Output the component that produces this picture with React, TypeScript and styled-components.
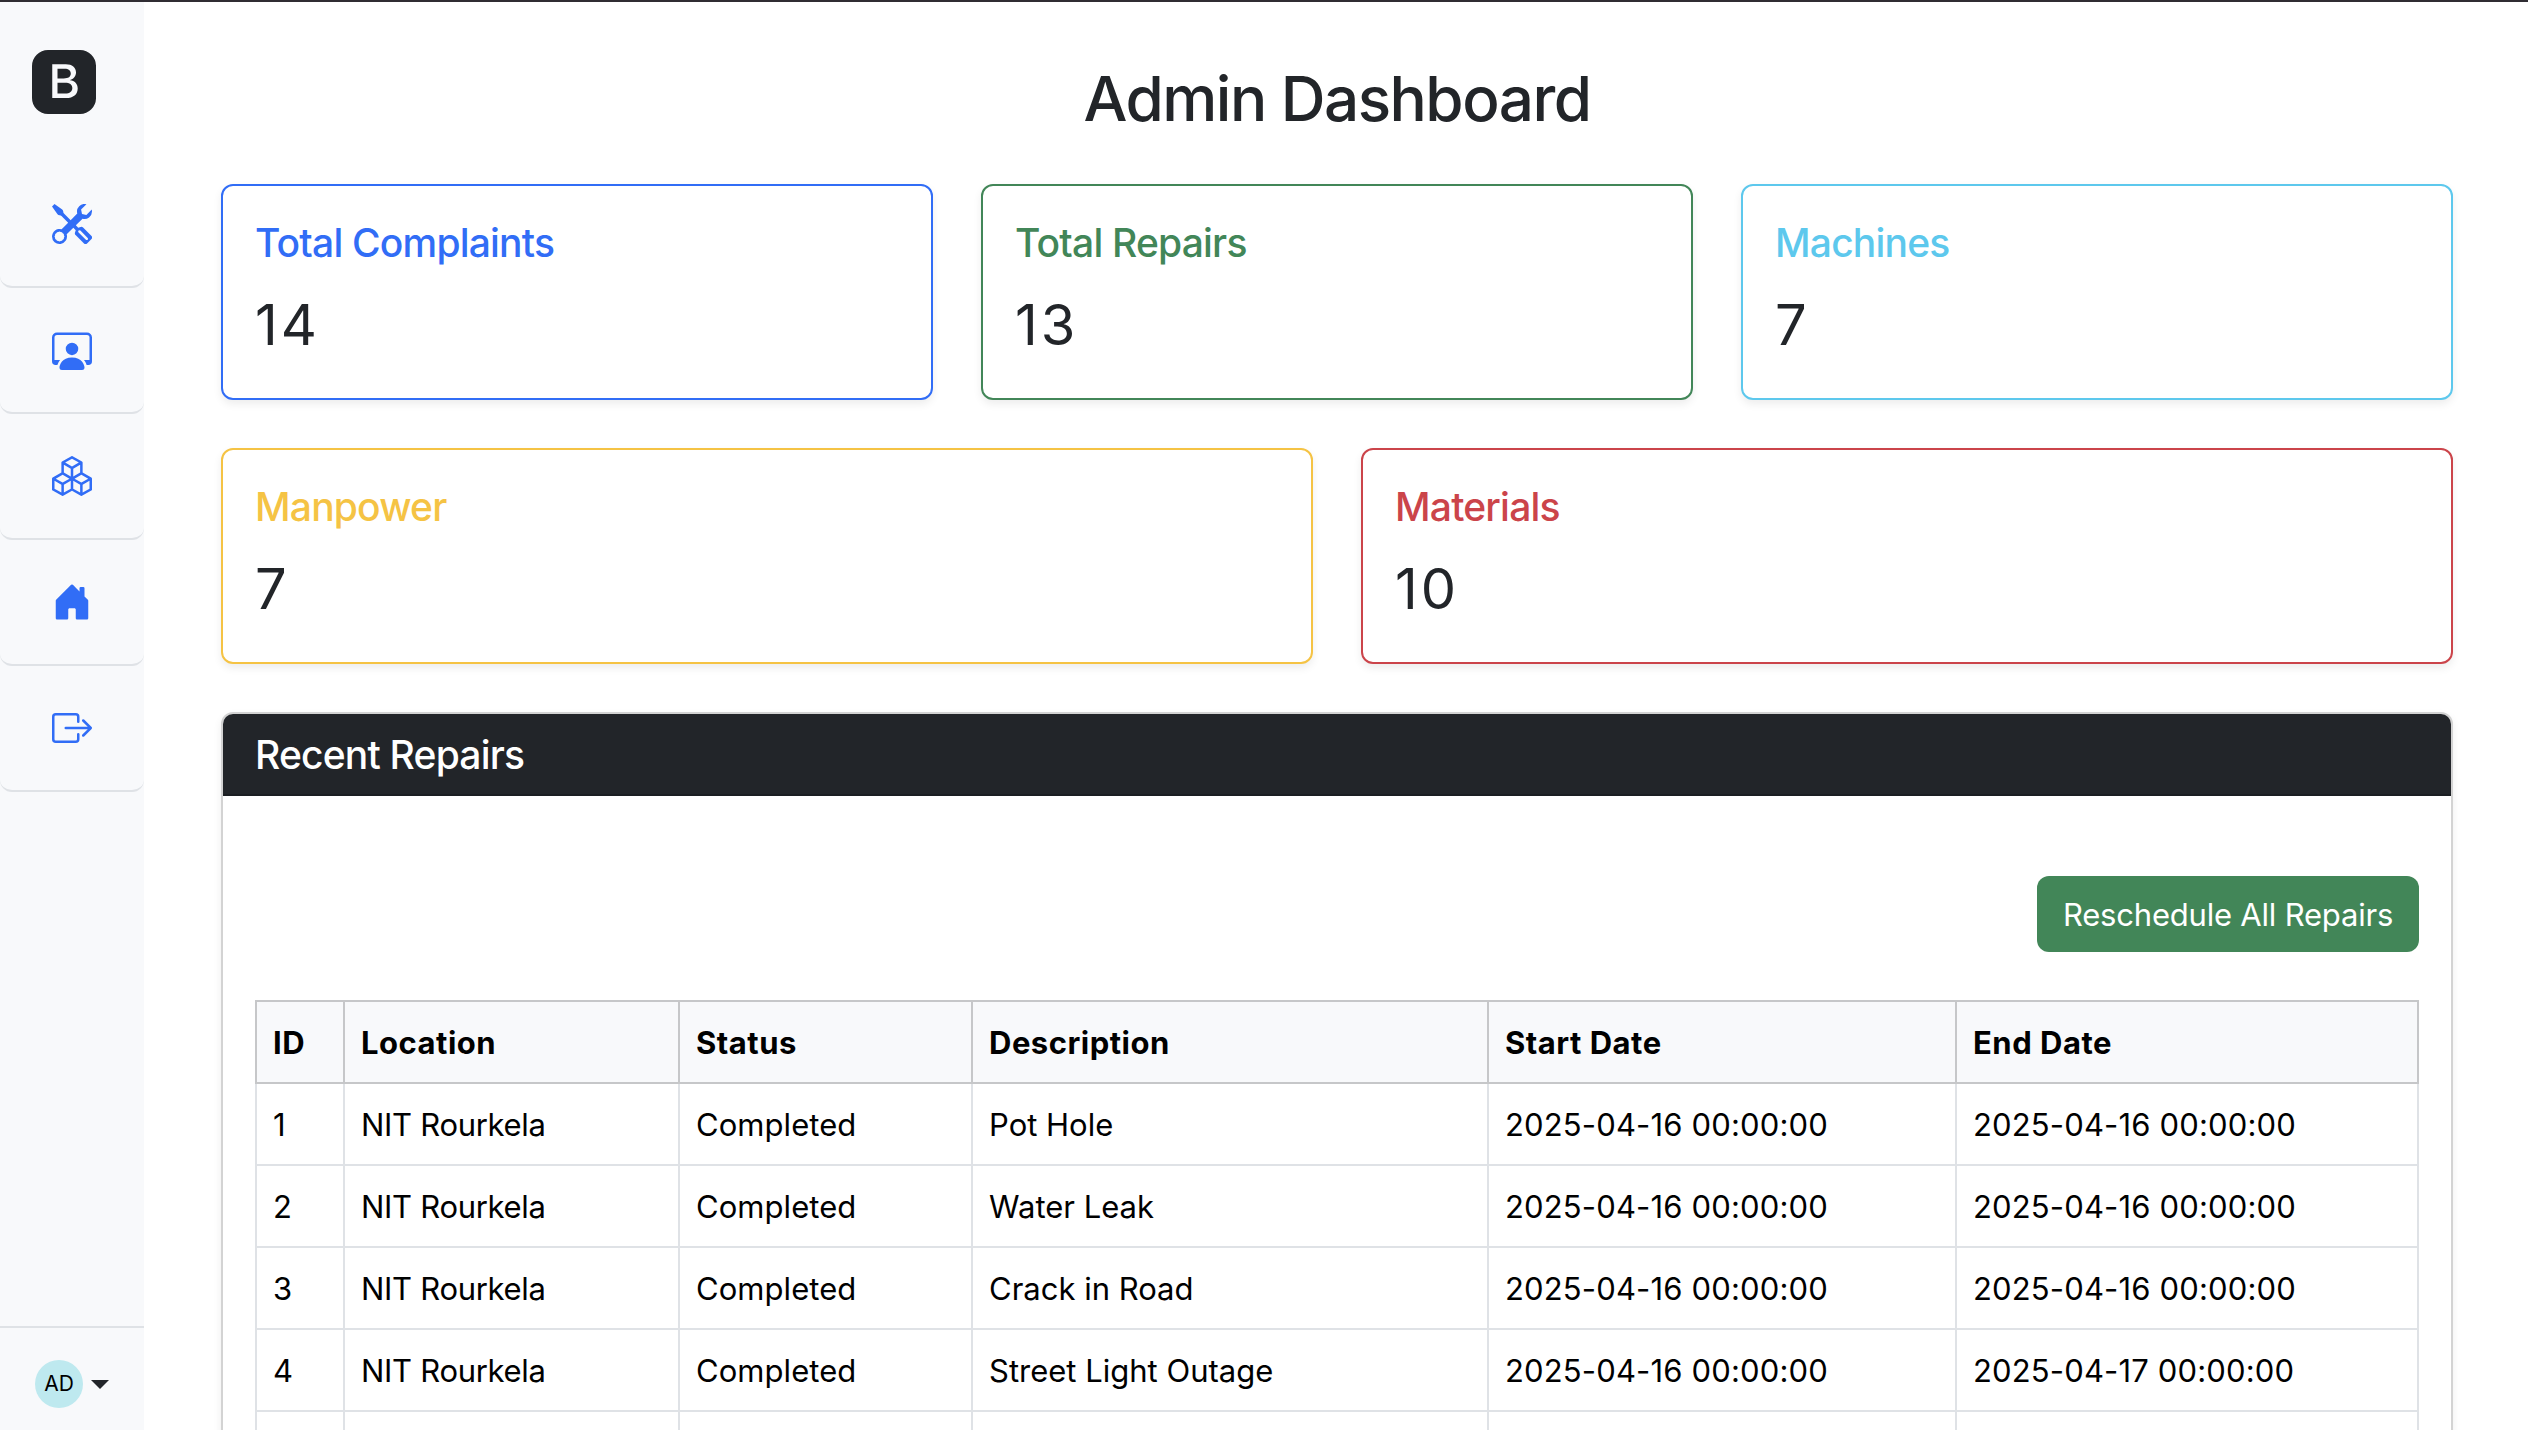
import React from 'react';
import styled, { createGlobalStyle, css } from 'styled-components';
import {
  BsBootstrapFill,
  BsBoxArrowRight,
  BsBoxes,
  BsHouseDoorFill,
  BsPersonWorkspace,
  BsTools,
} from 'react-icons/bs';

const GlobalStyle = createGlobalStyle`
  *, *::before, *::after { box-sizing: border-box; }
  body {
    margin: 0;
    overflow: hidden;
    background: #fff;
    color: #222529;
    font-family: Inter, "Liberation Sans", sans-serif;
    font-size: 31px;
    line-height: 48px;
  }
`;

const Page = styled.div`
  display: flex;
  height: 1430px;
  border-top: 2px solid #302d33;
  overflow: hidden;
`;

const Sidebar = styled.aside`
  display: flex;
  flex-direction: column;
  flex: 0 0 144px;
  background: #f8f9fb;
`;

const Brand = styled.a`
  display: flex;
  padding: 48px 32px;
  color: #222529;
`;

const Nav = styled.nav`
  display: flex;
  flex-direction: column;
  flex: 1;
`;

const NavLink = styled.a`
  display: flex;
  align-items: center;
  justify-content: center;
  height: 126px;
  border-bottom: 2px solid #dfe2e6;
  border-radius: 12px;
  color: #316df6;
`;

const Account = styled.div`
  display: flex;
  align-items: flex-start;
  gap: 8px;
  height: 104px;
  padding: 32px 0 0 35px;
  border-top: 2px solid #dfe2e6;
`;

const Avatar = styled.span`
  display: flex;
  align-items: center;
  justify-content: center;
  width: 48px;
  height: 48px;
  border-radius: 50%;
  background: #bee9ef;
  color: #000;
  font-size: 21px;
  line-height: 48px;
`;

const Caret = styled.span`
  margin-top: 20px;
  border-top: 9px solid #222529;
  border-left: 9px solid transparent;
  border-right: 9px solid transparent;
`;

const Main = styled.main`
  flex: 1;
  min-width: 0;
  padding: 59px 75px 0 77px;
`;

const PageTitle = styled.h2`
  margin: 0 0 47px;
  font-size: 62px;
  font-weight: 500;
  line-height: 76px;
  letter-spacing: -1.5px;
  text-align: center;
`;

const StatRow = styled.section`
  display: flex;
  gap: 48px;
  margin-bottom: 48px;
`;

const cardBox = css`
  border: 2px solid #d3d3d3;
  border-radius: 12px;
  background: #fff;
  box-shadow: 0 4px 8px rgba(0, 0, 0, 0.075);
`;

const StatCard = styled.article<{ $tone: string }>`
  ${cardBox}
  flex: 1;
  height: 216px;
  padding: 33px 32px 31px;
  border-color: ${(p) => p.$tone};
`;

const headingText = css`
  margin: 0;
  font-size: 39px;
  font-weight: 500;
  line-height: 48px;
  letter-spacing: -0.8px;
`;

const StatTitle = styled.h5<{ $tone: string }>`
  ${headingText}
  color: ${(p) => p.$tone};
`;

const StatValue = styled.p`
  margin: 16px 0 0;
  font-size: 56px;
  line-height: 84px;
  letter-spacing: 3px;
`;

const Panel = styled.section`
  ${cardBox}
  overflow: hidden;
`;

const PanelHeader = styled.header`
  padding: 17px 32px 15px;
  border-bottom: 2px solid #1b1e22;
  background: #222529;
  color: #fff;
`;

const PanelTitle = styled.h5`
  ${headingText}
`;

const PanelBody = styled.div`
  padding: 80px 32px 32px;
`;

const Actions = styled.div`
  display: flex;
  justify-content: flex-end;
  margin-bottom: 48px;
`;

const Button = styled.button`
  width: 382px;
  height: 76px;
  padding: 2px 0 0;
  border: 0;
  border-radius: 12px;
  background: #428658;
  color: #fff;
  font: inherit;
  letter-spacing: -0.2px;
`;

const Table = styled.table`
  width: 2164px;
  table-layout: fixed;
  border-collapse: separate;
  border-spacing: 0;
  color: #000;
`;

const Col = styled.col<{ $width: number }>`
  width: ${(p) => p.$width}px;
`;

const cell = css`
  padding: 17px 16px 15px;
  border: 0 solid;
  border-right-width: 2px;
  border-bottom-width: 2px;
  text-align: left;
  white-space: nowrap;
  &:first-child {
    border-left-width: 2px;
  }
`;

const HeadCell = styled.th`
  ${cell}
  height: 84px;
  border-top-width: 2px;
  border-color: #c6c7c9;
  background: #f8f9fb;
  font-weight: 700;
  letter-spacing: 0.5px;
`;

const Cell = styled.td<{ $tracking: number }>`
  ${cell}
  height: 82px;
  border-color: #dfe2e6;
  letter-spacing: ${(p) => p.$tracking}px;
`;

const NAV = [BsTools, BsPersonWorkspace, BsBoxes, BsHouseDoorFill, BsBoxArrowRight];

const STATS = [
  [
    { title: 'Total Complaints', value: 14, tone: '#316df6' },
    { title: 'Total Repairs', value: 13, tone: '#428658' },
    { title: 'Machines', value: 7, tone: '#5dc8ed' },
  ],
  [
    { title: 'Manpower', value: 7, tone: '#f5c344' },
    { title: 'Materials', value: 10, tone: '#cb444a' },
  ],
];

const COLUMNS = [
  { label: 'ID', width: 90, tracking: 0 },
  { label: 'Location', width: 335, tracking: -0.3 },
  { label: 'Status', width: 293, tracking: 0.05 },
  { label: 'Description', width: 516, tracking: 0 },
  { label: 'Start Date', width: 468, tracking: 0.15 },
  { label: 'End Date', width: 462, tracking: 0.15 },
];

const REPAIRS = [
  ['1', 'NIT Rourkela', 'Completed', 'Pot Hole', '2025-04-16 00:00:00', '2025-04-16 00:00:00'],
  ['2', 'NIT Rourkela', 'Completed', 'Water Leak', '2025-04-16 00:00:00', '2025-04-16 00:00:00'],
  ['3', 'NIT Rourkela', 'Completed', 'Crack in Road', '2025-04-16 00:00:00', '2025-04-16 00:00:00'],
  ['4', 'NIT Rourkela', 'Completed', 'Street Light Outage', '2025-04-16 00:00:00', '2025-04-17 00:00:00'],
  ['', '', '', '', '', ''],
];

export default function App() {
  return (
    <>
      <GlobalStyle />
      <Page>
        <Sidebar>
          <Brand>
            <BsBootstrapFill size={64} />
          </Brand>
          <Nav>
            {NAV.map((Icon, i) => (
              <NavLink key={i}>
                <Icon size={40} />
              </NavLink>
            ))}
          </Nav>
          <Account>
            <Avatar>AD</Avatar>
            <Caret />
          </Account>
        </Sidebar>
        <Main>
          <PageTitle>Admin Dashboard</PageTitle>
          {STATS.map((row, i) => (
            <StatRow key={i}>
              {row.map((s) => (
                <StatCard key={s.title} $tone={s.tone}>
                  <StatTitle $tone={s.tone}>{s.title}</StatTitle>
                  <StatValue>{s.value}</StatValue>
                </StatCard>
              ))}
            </StatRow>
          ))}
          <Panel>
            <PanelHeader>
              <PanelTitle>Recent Repairs</PanelTitle>
            </PanelHeader>
            <PanelBody>
              <Actions>
                <Button>Reschedule All Repairs</Button>
              </Actions>
              <Table>
                <colgroup>
                  {COLUMNS.map((c) => (
                    <Col key={c.label} $width={c.width} />
                  ))}
                </colgroup>
                <thead>
                  <tr>
                    {COLUMNS.map((c) => (
                      <HeadCell key={c.label}>{c.label}</HeadCell>
                    ))}
                  </tr>
                </thead>
                <tbody>
                  {REPAIRS.map((row, r) => (
                    <tr key={r}>
                      {row.map((value, c) => (
                        <Cell key={c} $tracking={COLUMNS[c].tracking}>
                          {value}
                        </Cell>
                      ))}
                    </tr>
                  ))}
                </tbody>
              </Table>
            </PanelBody>
          </Panel>
        </Main>
      </Page>
    </>
  );
}
